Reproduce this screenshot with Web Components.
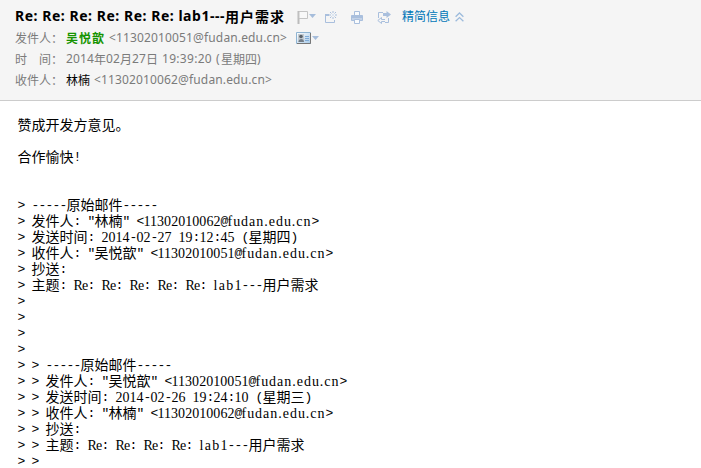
<!DOCTYPE html>
<html lang="zh-CN">
<head>
<meta charset="utf-8">
<title>Mail</title>
<style>
html,body{margin:0;height:100%;background:#fff;overflow:hidden}
</style>
</head>
<body>
<mail-view></mail-view>
<script>
/* A run of text whose letter spacing is adjusted to occupy a given width. */
class FitText extends HTMLElement {
  connectedCallback() {
    const root = this.attachShadow({mode: 'open'});
    root.innerHTML = '<style>:host{display:block;flex:none;white-space:pre}span{display:inline-block}</style><span></span>';
    const span = root.querySelector('span');
    span.textContent = this.getAttribute('text');
    const w = parseFloat(this.getAttribute('w'));
    const natural = span.getBoundingClientRect().width;
    span.style.letterSpacing = (w - natural) / [...span.textContent].length + 'px';
    this.style.width = w + 'px';
  }
}

/* One line of fixed-pitch body text: 7px Latin cells, 14px Chinese cells. */
class MonoLine extends HTMLElement {
  connectedCallback() {
    const root = this.attachShadow({mode: 'open'});
    root.innerHTML = `<style>
      :host{display:flex;height:16px;white-space:pre;color:#000}
      .m{font:13px/16px "Liberation Mono",monospace;padding-top:1px;height:15px}
      .s{font:14px/16px "Liberation Serif",serif;padding-top:1px;height:15px}
      .c{font:14px/14px "Noto Sans CJK SC",sans-serif;height:14px}
    </style>`;
    const runs = this.getAttribute('text').match(/[\u4e00-\u9fff\u3002]+|[A-Za-z.]+|[\d]+|[^\u4e00-\u9fff\u3002A-Za-z.\d]+/g) || [];
    for (const part of runs) {
      const cjk = /[\u3002\u4e00-\u9fff]/.test(part);
      const run = document.createElement('fit-text');
      run.className = cjk ? 'c' : /[A-Za-z\d]/.test(part) ? 's' : 'm';
      run.setAttribute('text', part);
      run.setAttribute('w', part.length * (cjk ? 14 : 7));
      root.append(run);
    }
  }
}

const ICONS = {
  flag: [19, 14, `<path d="M1.5 1v13" stroke="#bbb" stroke-width="2" fill="none"/><path d="M2 1.5h8.500v7H2z" fill="#f8f8f8" stroke="#c4c4c4"/><path d="M12 4h7l-3.5 4z" fill="#a6bddb"/>`],
  create: [13, 13, `<path d="M5 3.5H1.5v8h9V9" fill="none" stroke="#a9bfdd"/><path d="M1 3h4v2H1z" fill="#a9bfdd"/><path d="M9 0v2M9 6v2M5 4h2M11 4h2M6 1l1.500 1.500M12 1l-1.500 1.500M6 7l1.500-1.500M12 7l-1.500-1.500" stroke="#a9bfdd"/><path d="M8 3h2v2H8z" fill="#dce6f2"/>`],
  print: [12, 13, `<path d="M3.500.5h5v4h-5z" fill="#f9fbfd" stroke="#a9bfdd"/><path d="M.5 4.500h11v5H.5z" fill="#c3d2e7" stroke="#a9bfdd"/><path d="M1 5h10v2H1z" fill="#a9bfdd"/><path d="M3.500 8.500h5v4h-5z" fill="#f9fbfd" stroke="#a9bfdd"/>`],
  forward: [14, 13, `<path d="M6 1.500H1.500V7M11.500 7v4.500H8" fill="none" stroke="#a9bfdd"/><path d="M6 2h3.500V0L14 3.500 9.500 7V5H6z" fill="#a9bfdd"/><path d="M8 8.500H4.500v-2L.8 9.500l3.700 3v-2H8" fill="none" stroke="#a9bfdd"/>`],
  chevrons: [9, 10, `<path d="M.6 4.700L4.500 1l3.900 3.700M.6 9.300l3.900-3.700 3.900 3.700" fill="none" stroke="#9dbbdc" stroke-width="1.300"/>`],
  card: [23, 12, `<defs><linearGradient id="g" x2="1" y2="1"><stop offset="0" stop-color="#fff"/><stop offset="1" stop-color="#a8cae8"/></linearGradient></defs><path d="M.5.5h14v11H.5z" fill="url(#g)" stroke="#8fb4d2"/><path d="M14.500 1v10.500H1" fill="none" stroke="#777"/><path d="M2 2h6v8H2z" fill="#c3cad0"/><circle cx="5" cy="4.500" r="1.800" fill="#5a6269"/><path d="M2.500 10c0-4 5.500-4 5.500 0z" fill="#727d87"/><path d="M9 4.500h4M9 6.500h4M9 8.500h4" stroke="#7fabd8"/><path d="M16 4h7l-3.500 4z" fill="#a6bddb"/>`]
};
class MailIcon extends HTMLElement {
  connectedCallback() {
    const [w, h, art] = ICONS[this.getAttribute('name')];
    this.attachShadow({mode: 'open'}).innerHTML =
      `<style>:host{display:block;flex:none;width:${w}px;height:${h}px}svg{display:block}</style><svg width="${w}" height="${h}" viewBox="0 0 ${w} ${h}">${art}</svg>`;
  }
}

class MailField extends HTMLElement {
  connectedCallback() {
    this.attachShadow({mode: 'open'}).innerHTML = `<style>
      :host{display:flex;align-items:center;height:21px;color:#7b7b7b;font:12px/21px "Noto Sans","Noto Sans CJK SC",sans-serif}
      .label{width:51px;flex:none;white-space:pre;font-family:"Noto Sans CJK SC",sans-serif}
    </style><span class="label">${this.getAttribute('label')}</span><slot></slot>`;
  }
}

class MailHeader extends HTMLElement {
  connectedCallback() {
    this.attachShadow({mode: 'open'}).innerHTML = `<style>
      :host{display:block;box-sizing:border-box;height:101px;padding:5px 0 0 15px;background:#f5f5f5;border-bottom:1px solid #ccc}
      .title{display:flex;align-items:center;height:22px;color:#000;font:bold 14px/22px "Noto Sans","Noto Sans CJK SC",sans-serif}
      .tools{display:flex;align-items:center;padding:2px 0 0 12px}
      .more{display:flex;align-items:center;gap:5px;color:#0077b8;font:12px/22px "Noto Sans CJK SC",sans-serif}
      .from{color:#159400;font-weight:bold}.to{color:#000}
      .cjk{font-family:"Noto Sans CJK SC",sans-serif}
    </style>
    <div class="title"><fit-text w="210" text="Re: Re: Re: Re: Re: Re: lab1---"></fit-text><fit-text class="cjk" w="60" text="用户需求"></fit-text>
      <div class="tools"><mail-icon name="flag"></mail-icon><mail-icon name="create" style="margin-left:8px"></mail-icon><mail-icon name="print" style="margin-left:14px"></mail-icon><mail-icon name="forward" style="margin-left:14px"></mail-icon></div>
      <div class="more" style="margin-left:11px"><fit-text w="48" text="精简信息"></fit-text><mail-icon name="chevrons" style="margin-top:2px"></mail-icon></div>
    </div>
    <mail-field label="发件人："><fit-text class="from cjk" w="39" text="吴悦歆"></fit-text><fit-text style="margin-left:4px" w="178" text="&lt;11302010051@fudan.edu.cn&gt;"></fit-text><mail-icon name="card" style="margin-left:9px"></mail-icon></mail-field>
    <mail-field label="时　间："><fit-text w="28" text="2014"></fit-text><fit-text class="cjk" w="12" text="年"></fit-text><fit-text w="14" text="02"></fit-text><fit-text class="cjk" w="12" text="月"></fit-text><fit-text w="14" text="27"></fit-text><fit-text class="cjk" w="12" text="日"></fit-text><fit-text style="margin-left:4px" w="50" text="19:39:20"></fit-text><fit-text style="margin-left:4px" w="5" text="("></fit-text><fit-text class="cjk" w="36" text="星期四"></fit-text><fit-text w="5" text=")"></fit-text></mail-field>
    <mail-field label="收件人："><fit-text class="to cjk" w="24" text="林楠"></fit-text><fit-text style="margin-left:4px" w="178" text="&lt;11302010062@fudan.edu.cn&gt;"></fit-text></mail-field>`;
  }
}

const LINES = [
  '赞成开发方意见。', '', '合作愉快!', '', '',
  '> -----原始邮件-----',
  '> 发件人: "林楠" <11302010062@fudan.edu.cn>',
  '> 发送时间: 2014-02-27 19:12:45 (星期四)',
  '> 收件人: "吴悦歆" <11302010051@fudan.edu.cn>',
  '> 抄送:',
  '> 主题: Re: Re: Re: Re: Re: lab1---用户需求',
  '>', '>', '>', '>',
  '> > -----原始邮件-----',
  '> > 发件人: "吴悦歆" <11302010051@fudan.edu.cn>',
  '> > 发送时间: 2014-02-26 19:24:10 (星期三)',
  '> > 收件人: "林楠" <11302010062@fudan.edu.cn>',
  '> > 抄送:',
  '> > 主题: Re: Re: Re: Re: lab1---用户需求',
  '> >'
];
class MailBody extends HTMLElement {
  connectedCallback() {
    const root = this.attachShadow({mode: 'open'});
    root.innerHTML = '<style>:host{display:block;padding:16px 0 0 17.500px}</style>';
    for (const t of LINES) {
      const line = document.createElement('mono-line');
      line.setAttribute('text', t);
      root.append(line);
    }
  }
}
class MailView extends HTMLElement {
  connectedCallback() {
    this.attachShadow({mode: 'open'}).innerHTML =
      '<style>:host{display:block;height:468px;overflow:hidden;background:#fff}</style><mail-header></mail-header><mail-body></mail-body>';
  }
}
customElements.define('fit-text', FitText);
customElements.define('mono-line', MonoLine);
customElements.define('mail-icon', MailIcon);
customElements.define('mail-field', MailField);
customElements.define('mail-header', MailHeader);
customElements.define('mail-body', MailBody);
customElements.define('mail-view', MailView);
</script>
</body>
</html>
